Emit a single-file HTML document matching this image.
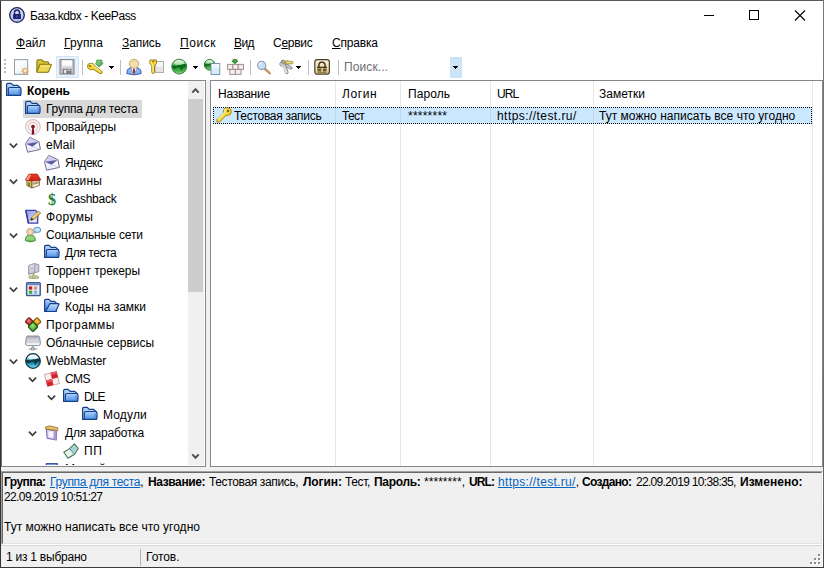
<!DOCTYPE html>
<html lang="ru"><head><meta charset="utf-8"><title>База.kdbx - KeePass</title>
<style>
*{box-sizing:border-box;margin:0;padding:0}
html,body{width:824px;height:568px;overflow:hidden;background:#fff}
body{font-family:"Liberation Sans",sans-serif;font-size:12px;color:#000;position:relative}
.abs{position:absolute}
.t{position:absolute;white-space:nowrap;line-height:14px;height:14px}
#win{position:absolute;left:0;top:0;width:824px;height:568px;background:#fff;overflow:hidden}
#bl{left:0;top:0;width:1px;height:568px;background:#333}
#bt{left:0;top:0;width:824px;height:1px;background:#5a5a5a}
#br{left:823px;top:0;width:1px;height:568px;background:linear-gradient(#777 0,#686868 80%,#484848 100%)}
#bb{left:0;top:567px;width:824px;height:1px;background:#3a3a3a}
.menu u{text-decoration:underline;text-underline-offset:1px}
#tree{left:1px;top:80px;width:205px;height:387px;border:1px solid #828790;border-left-color:#6a6a6a;background:#fff;overflow:hidden}
#treein{left:0;top:0;width:203px;height:384px;overflow:hidden}
#list{left:210px;top:80px;width:613px;height:387px;border:1px solid #828790;background:#fff;overflow:hidden}
.tr{position:absolute;white-space:nowrap;line-height:18px;height:18px;font-size:12px}
.ic{position:absolute;width:16px;height:16px;overflow:visible}
.chev{position:absolute;width:9px;height:6px}
.sep{position:absolute;top:60px;width:1px;height:15px;background:#bdbdbd}
.dd{position:absolute;width:0;height:0;border-left:3px solid transparent;border-right:3px solid transparent;border-top:3px solid #000}
#details{left:1px;top:471px;width:822px;height:74px;background:#f0f0f0;border:1px solid;border-color:#a0a0a0 #fff #fff #a0a0a0}
#detin{left:0;top:0;width:820px;height:72px;border:1px solid;border-color:#696969 #e3e3e3 #e3e3e3 #696969}
#dettext{left:3px;top:472px;width:816px;height:70px;overflow:hidden}
.dl{position:absolute;left:2px;white-space:nowrap;line-height:15px;height:15px;font-size:12px}
#status{left:1px;top:545px;width:821px;height:22px;background:#f0f0f0;border-top:1px solid #d7d7d7}
a{color:#0563c1;text-decoration:underline}
.colsep{position:absolute;top:0;width:1px;height:385px;background:rgba(160,160,160,0.25)}
.hsep{position:absolute;top:0;width:1px;height:24px;background:#e5e5e5}
.lt{position:absolute;white-space:nowrap;line-height:14px;height:14px;font-size:12px}
</style></head><body>
<div id="win">
<svg class="ic" style="left:9px;top:7px" viewBox="0 0 16 16"><defs><radialGradient id="g35_k" cx="0.5" cy="0.35" r="0.7"><stop offset="0" stop-color="#eef0fc"/><stop offset="1" stop-color="#a8b0e4"/></radialGradient></defs>
<circle cx="8" cy="8" r="7.3" fill="url(#g35_k)" stroke="#1a2058" stroke-width="1.3"/>
<path d="M5.5 7.4 V5.4 A2.5 2.5 0 0 1 10.5 5.4 V7.4" fill="#d4d8f4" stroke="#1e2670" stroke-width="1.5"/>
<rect x="4.1" y="7" width="7.8" height="5" rx="0.5" fill="#1b2270"/>
<rect x="7.4" y="8.4" width="1.2" height="2.2" fill="#5a66c0"/></svg>
<!-- window buttons -->
<svg class="abs" style="left:700px;top:8px;width:120px;height:16px" viewBox="0 0 120 16">
<path d="M4 7.5 H14" stroke="#000" stroke-width="1" fill="none"/>
<rect x="49.5" y="2.5" width="9" height="9" stroke="#000" stroke-width="1" fill="none"/>
<path d="M95 2.5 L105 12.5 M105 2.5 L95 12.5" stroke="#000" stroke-width="1.1" fill="none"/>
</svg>
<!-- menu -->
<div class="t" id="title" style="left:30px;top:9px;letter-spacing:-0.43px;">База.kdbx - KeePass</div>
<div class="t" id="m1" style="left:16px;top:36px;letter-spacing:-0.01px;"><u>Ф</u>айл</div>
<div class="t" id="m2" style="left:64px;top:36px;letter-spacing:0.19px;"><u>Г</u>руппа</div>
<div class="t" id="m3" style="left:122px;top:36px;letter-spacing:-0.08px;"><u>З</u>апись</div>
<div class="t" id="m4" style="left:180px;top:36px;letter-spacing:0.56px;"><u>П</u>оиск</div>
<div class="t" id="m5" style="left:234px;top:36px;letter-spacing:-0.62px;"><u>В</u>ид</div>
<div class="t" id="m6" style="left:273px;top:36px;letter-spacing:-0.26px;">С<u>е</u>рвис</div>
<div class="t" id="m7" style="left:332px;top:36px;letter-spacing:-0.18px;"><u>С</u>правка</div>
<div class="t" id="search" style="left:344px;top:60px;letter-spacing:0.1px;color:#6d6d6d;">Поиск...</div>
<!-- toolbar -->
<div id="toolbar">
<svg class="abs" style="left:4px;top:58px;width:4px;height:18px" viewBox="0 0 4 18"><g fill="#bcbcbc"><rect x="0" y="1" width="2" height="2"/><rect x="0" y="5" width="2" height="2"/><rect x="0" y="9" width="2" height="2"/><rect x="0" y="13" width="2" height="2"/></g></svg>
<div class="abs" style="left:56px;top:56px;width:23px;height:22px;background:#e5f1fb;border:1px solid #d2e6f7"></div>
<svg class="ic" style="left:13px;top:59px" viewBox="0 0 16 16"><defs><linearGradient id="g23_n" x1="0" y1="0" x2="0.7" y2="1"><stop offset="0" stop-color="#ffffff"/><stop offset="0.5" stop-color="#fafcfe"/><stop offset="1" stop-color="#dfebf8"/></linearGradient></defs>
<rect x="1.5" y="0.7" width="13.2" height="14.6" fill="url(#g23_n)" stroke="#838f9c" stroke-width="0.9"/>
<g fill="#dda658"><circle cx="12" cy="11.8" r="2.6"/><path d="M12 8 L12.9 10 L15.2 9.2 L14.2 11.6 L16 13 L13.6 13.4 L13.2 15.6 L12 14 L10.4 15.4 L10.2 13.2 L8 12.8 L9.8 11.4 L9 9.4 L11.1 10Z"/></g>
<circle cx="12.1" cy="11.8" r="1.7" fill="#fdf0c4"/></svg><svg class="ic" style="left:36px;top:59px" viewBox="0 0 16 16"><path d="M0.9 2.2 Q0.9 0.8 2.2 0.8 L5.4 0.8 Q6.2 0.8 6.8 1.6 L7.6 2.8 L11.4 2.8 Q12.6 2.8 12.6 4 L12.6 12.6 L0.9 12.6Z" fill="#d8c23c" stroke="#85750f" stroke-width="1.1" stroke-linejoin="round"/>
<path d="M4.6 5.2 L14.6 5.2 Q15.8 5.2 15.2 6.4 L12.6 12.4 Q12.3 13.2 11.4 13.2 L1.6 13.2 Q0.6 13.2 1 12.2 L3.6 6 Q3.9 5.2 4.6 5.2Z" fill="#ecd854" stroke="#85750f" stroke-width="1.1"/>
<path d="M5 6.4 L14 6.4 L13.4 7.6 L4.4 7.6Z" fill="#f8ec94"/></svg><svg class="ic" style="left:59px;top:59px" viewBox="0 0 16 16"><rect x="1" y="0.6" width="14" height="14.4" fill="#c4c4c8" stroke="#808086" stroke-width="1"/>
<rect x="3" y="1.2" width="10" height="7" fill="#fbfbfc"/><rect x="3" y="6.4" width="10" height="1.8" fill="#e4e4e8"/>
<rect x="3.8" y="10" width="8.6" height="5" fill="#7c7c82"/><rect x="5.2" y="10.8" width="2" height="3.4" fill="#f4f4f4"/><rect x="7.8" y="10.6" width="4" height="1.2" fill="#c8c8cc"/></svg><svg class="ic" style="left:87px;top:59px" viewBox="0 0 16 16"><defs><linearGradient id="g26_a" x1="0" y1="0" x2="1" y2="1"><stop offset="0" stop-color="#9ee29a"/><stop offset="1" stop-color="#2f9444"/></linearGradient></defs>
<path d="M9.6 1.1 L14.9 1.1 L14.9 3.8 L16.2 4.4 L12 8 L8.4 4.6 L9.6 4.2Z" fill="url(#g26_a)" stroke="#3c8c4c" stroke-width="0.7" stroke-linejoin="round"/>
<path d="M0.5 7.2 Q0.5 4.4 3.6 4.3 Q6.4 4.2 7.8 6.2 L8.4 7.6 L14.8 12.2 L15 14.2 L13 14.6 L6.6 10.4 Q3.6 11.4 1.5 9.8 Q0.4 8.6 0.5 7.2Z" fill="#f4d63a" stroke="#94780e" stroke-width="0.9" stroke-linejoin="round"/>
<path d="M1.8 6.4 Q3 5.2 5.6 5.4 L7.4 7.6 L13.6 12.4" fill="none" stroke="#fdf2a0" stroke-width="1"/>
<ellipse cx="2.9" cy="6.9" rx="1.1" ry="0.9" fill="#7c5c0c"/></svg><svg class="ic" style="left:126px;top:59px" viewBox="0 0 16 16"><path d="M0.9 14.6 Q0.5 9.8 4.6 8.8 L11.4 8.8 Q15.5 9.8 15.1 14.6 Q8 17 0.9 14.6Z" fill="#86b4ee" stroke="#2c5cac" stroke-width="1"/>
<path d="M5.4 8.6 L8 15.4 L10.6 8.6Z" fill="#ffffff"/>
<path d="M7.2 9.4 L8.8 9.4 L9.2 13.6 L8 15.2 L6.8 13.6Z" fill="#b42c28"/>
<ellipse cx="8" cy="4.7" rx="4.7" ry="4.5" fill="#f6dfae" stroke="#c4a060" stroke-width="0.9"/>
<path d="M3.8 3.4 Q8 -0.6 12.2 3.4 Q8 1.8 3.8 3.4Z" fill="#e8c884"/></svg><svg class="ic" style="left:148px;top:59px" viewBox="0 0 16 16"><rect x="7" y="2.6" width="8.6" height="10.8" fill="#e6e6e6" stroke="#a4a4a4" stroke-width="0.9"/>
<rect x="8.6" y="3.2" width="6.4" height="4.6" fill="#f6f6f6"/>
<path d="M2 1 L8.4 1 L8.6 4.4 L6.6 6.8 L6.6 13.4 L5.2 14.8 L3.8 13.6 L3.8 6.8 L1.8 4.4Z" fill="#f4d63a" stroke="#94780e" stroke-width="0.9" stroke-linejoin="round"/>
<path d="M3.2 2 L3.2 4.2 L4.8 6.2 L4.8 13" fill="none" stroke="#fdf2a0" stroke-width="0.9"/>
<rect x="4.4" y="1.8" width="1.8" height="1.4" fill="#7c5c0c"/></svg><svg class="ic" style="left:170px;top:59px" viewBox="0 0 16 16"><defs><linearGradient id="g29_g" x1="0" y1="0" x2="0" y2="1"><stop offset="0" stop-color="#d4f0d4"/><stop offset="0.32" stop-color="#6cc66c"/><stop offset="0.55" stop-color="#2a9a34"/><stop offset="0.8" stop-color="#48b44c"/><stop offset="1" stop-color="#98dc98"/></linearGradient>
<clipPath id="g29_c"><circle cx="9.2" cy="7.6" r="7.4"/></clipPath></defs>
<circle cx="9.2" cy="7.6" r="7.4" fill="url(#g29_g)"/>
<g clip-path="url(#g29_c)"><path d="M1.80 7.01 Q4.27 5.43 6.24 7.21 L7.82 6.02 Q11.17 4.64 16.60 5.03 L16.60 7.60 Q14.13 7.99 13.15 9.18 L11.57 11.55 Q10.38 10.56 9.79 8.39 L7.23 8.59 Q6.24 10.17 4.27 9.97 Q2.29 9.18 1.80 7.01Z" fill="#0d6a1e"/>
<ellipse cx="9.2" cy="3.46" rx="5.13" ry="2.47" fill="#f4fff4" opacity="0.55"/></g>
<circle cx="9.2" cy="7.6" r="7.4" fill="none" stroke="#2c6c34" stroke-width="0.9"/></svg><svg class="ic" style="left:204px;top:59px" viewBox="0 0 16 16"><defs><linearGradient id="g30_g" x1="0" y1="0" x2="0" y2="1"><stop offset="0" stop-color="#d4f0d4"/><stop offset="0.32" stop-color="#6cc66c"/><stop offset="0.55" stop-color="#2a9a34"/><stop offset="0.8" stop-color="#48b44c"/><stop offset="1" stop-color="#98dc98"/></linearGradient>
<clipPath id="g30_c"><circle cx="5.7" cy="5.8" r="5.4"/></clipPath></defs>
<circle cx="5.7" cy="5.8" r="5.4" fill="url(#g30_g)"/>
<g clip-path="url(#g30_c)"><path d="M0.30 5.37 Q2.10 4.22 3.54 5.51 L4.69 4.65 Q7.14 3.64 11.10 3.93 L11.10 5.80 Q9.30 6.09 8.58 6.95 L7.43 8.68 Q6.56 7.96 6.13 6.38 L4.26 6.52 Q3.54 7.67 2.10 7.53 Q0.66 6.95 0.30 5.37Z" fill="#0d6a1e"/>
<ellipse cx="5.7" cy="2.78" rx="3.74" ry="1.80" fill="#f4fff4" opacity="0.55"/></g>
<circle cx="5.7" cy="5.8" r="5.4" fill="none" stroke="#2c6c34" stroke-width="0.9"/><rect x="7" y="4.5" width="8.8" height="11" fill="#dcebf9" stroke="#6f8ca8" stroke-width="0.9"/>
<rect x="7.6" y="5.1" width="7.6" height="3.4" fill="#f2f8fe"/></svg><svg class="ic" style="left:228px;top:59px" viewBox="0 0 16 16"><path d="M5 0.4 L8.8 0.4 L8.8 2.2 L10 2.2 L6.9 4.8 L3.8 2.2 L5 2.2Z" fill="#3ea83c" stroke="#22721f" stroke-width="0.7" stroke-linejoin="round"/>
<g fill="#f6eeee" stroke="#a09090" stroke-width="1"><rect x="-0.4" y="5.4" width="5.2" height="5"/><rect x="4.8" y="5.4" width="5.4" height="5"/><rect x="10.2" y="5.4" width="5.2" height="5"/><rect x="1.8" y="10.4" width="5.6" height="5"/><rect x="7.4" y="10.4" width="5.6" height="5"/></g></svg><svg class="ic" style="left:256px;top:59px" viewBox="0 0 16 16"><path d="M8.8 9.6 L13.8 14.2" stroke="#a8703c" stroke-width="2.2" stroke-linecap="round"/>
<path d="M9 9.6 L13.6 13.8" stroke="#ecc090" stroke-width="1" stroke-linecap="round"/>
<circle cx="5.7" cy="6.5" r="4.1" fill="#c2def9" stroke="#8e9eae" stroke-width="1.1"/>
<path d="M3 5.8 Q3.6 3.8 6 3.4" fill="none" stroke="#f4faff" stroke-width="1.2"/></svg><svg class="ic" style="left:279px;top:59px" viewBox="0 0 16 16"><g stroke="#7c7c84" stroke-width="0.8" stroke-linejoin="round">
<path d="M1.6 3.2 Q3.4 1 5.6 2.6 L6.4 4.8 L9.2 13.4 L8.4 14.8 L6.8 14.4 L3.8 7.6 Q1.4 7.6 0.8 5.6 Q0.6 4.2 1.6 3.2Z" fill="#d4d4da"/>
<path d="M6 5.6 L8 5.2 L13 8.2 L13.2 9.8 L11.6 10.2 L6.8 7.6Z" fill="#c8c8d0"/>
<path d="M2.4 1.6 Q4.6 0.4 6.2 2 L6.8 3.6 Q6 5.4 4 5.2 Q2 4.6 2.4 1.6Z" fill="#b4aa90"/></g>
<path d="M3 7 L7.4 14" stroke="#f4f4f8" stroke-width="1"/>
<path d="M6.8 2 Q9 1.2 10.2 2.2 L13.6 2.4 Q14.8 3.4 13.6 4.8 L10 5 Q8.4 5.8 6.8 4.8 Q6 3.2 6.8 2Z" fill="#d6c458" stroke="#96842c" stroke-width="0.7" stroke-linejoin="round"/>
<path d="M8 3.4 L13 3.5" stroke="#f0e49c" stroke-width="0.9"/></svg><svg class="ic" style="left:314px;top:59px" viewBox="0 0 16 16"><defs><linearGradient id="g34_l" x1="0" y1="0" x2="0" y2="1"><stop offset="0" stop-color="#f8efd2"/><stop offset="1" stop-color="#e2cc94"/></linearGradient></defs>
<rect x="0.8" y="0.6" width="14.6" height="14.6" rx="2.4" fill="url(#g34_l)" stroke="#4a3f2c" stroke-width="1.2"/>
<path d="M4.9 8.2 V6.4 A3.1 3.3 0 0 1 11.1 6.4 V8.2" fill="none" stroke="#2a2010" stroke-width="1.3"/>
<rect x="3.4" y="8.2" width="9.2" height="5.4" fill="#ad9457"/>
<rect x="7.4" y="8.4" width="1.4" height="5.2" fill="#e4d4a4"/>
<path d="M3 8.3 H13 " stroke="#2a2010" stroke-width="1.1"/>
<path d="M3.6 11 H7 M9 11 H12.4" stroke="#2a2010" stroke-width="1.1"/>
<path d="M3.6 13.4 H12.4" stroke="#7c6838" stroke-width="0.8"/></svg>
<div class="sep" style="left:82px"></div>
<div class="sep" style="left:120px"></div>
<div class="sep" style="left:250px"></div>
<div class="sep" style="left:308px"></div>
<div class="sep" style="left:338px"></div>
<svg class="abs" style="left:109px;top:66px;width:5px;height:3px" viewBox="0 0 5 3" shape-rendering="crispEdges"><rect x="0" y="0" width="5" height="1"/><rect x="1" y="1" width="3" height="1"/><rect x="2" y="2" width="1" height="1"/></svg>
<svg class="abs" style="left:193px;top:66px;width:5px;height:3px" viewBox="0 0 5 3" shape-rendering="crispEdges"><rect x="0" y="0" width="5" height="1"/><rect x="1" y="1" width="3" height="1"/><rect x="2" y="2" width="1" height="1"/></svg>
<svg class="abs" style="left:296px;top:66px;width:5px;height:3px" viewBox="0 0 5 3" shape-rendering="crispEdges"><rect x="0" y="0" width="5" height="1"/><rect x="1" y="1" width="3" height="1"/><rect x="2" y="2" width="1" height="1"/></svg>
<div class="abs" style="left:450px;top:57px;width:12px;height:21px;background:#cce4f7"></div>
<svg class="abs" style="left:453px;top:66px;width:5px;height:3px" viewBox="0 0 5 3" shape-rendering="crispEdges"><rect x="0" y="0" width="5" height="1"/><rect x="1" y="1" width="3" height="1"/><rect x="2" y="2" width="1" height="1"/></svg>
</div>
<div class="abs" style="left:1px;top:80px;width:822px;height:465px;background:#f0f0f0"></div>
<!-- tree -->
<div class="abs" id="tree"><div class="abs" id="treein">
<svg class="ic" style="left:4px;top:2px" viewBox="0 0 16 16"><defs><linearGradient id="g1_f" x1="0" y1="0" x2="0" y2="1"><stop offset="0" stop-color="#b0d4fc"/><stop offset="1" stop-color="#4f8fe6"/></linearGradient></defs>
<path d="M0.6 1.5 Q0.6 0.3 1.8 0.3 L5.3 0.3 L7.2 2.4 L11.8 2.4 L14.4 4.9 L14.4 12.4 L0.6 12.4Z" fill="#b0cff6" stroke="#163f88" stroke-width="1.2" stroke-linejoin="round"/>
<rect x="2.3" y="4.5" width="12.7" height="7.9" rx="1.5" fill="url(#g1_f)" stroke="#163f88" stroke-width="1.2"/>
<path d="M13.1 6.2 V11.2" stroke="#3a6cc0" stroke-width="0.7"/></svg>
<div class="t" id="r0" style="left:25px;top:3px;letter-spacing:-0.06px;font-weight:bold;">Корень</div>
<div class="abs" style="left:21px;top:19px;width:119px;height:18px;background:#d9d9d9"></div>
<svg class="ic" style="left:23px;top:20px" viewBox="0 0 16 16"><defs><linearGradient id="g2_f" x1="0" y1="0" x2="0" y2="1"><stop offset="0" stop-color="#b0d4fc"/><stop offset="1" stop-color="#4f8fe6"/></linearGradient></defs>
<path d="M0.6 1.5 Q0.6 0.3 1.8 0.3 L5.3 0.3 L7.2 2.4 L11.8 2.4 L14.4 4.9 L14.4 12.4 L0.6 12.4Z" fill="#b0cff6" stroke="#163f88" stroke-width="1.2" stroke-linejoin="round"/>
<rect x="2.3" y="4.5" width="12.7" height="7.9" rx="1.5" fill="url(#g2_f)" stroke="#163f88" stroke-width="1.2"/>
<path d="M13.1 6.2 V11.2" stroke="#3a6cc0" stroke-width="0.7"/></svg>
<div class="t" id="r1" style="left:44px;top:21px;letter-spacing:-0.22px;">Группа для теста</div>
<svg class="ic" style="left:23px;top:38px" viewBox="0 0 16 16"><circle cx="7.9" cy="7.9" r="7.3" fill="#fdf5f5" stroke="#dcc0c0" stroke-width="1.1"/>
<circle cx="7.9" cy="7.9" r="4.5" fill="#fef8f8" stroke="#dfc0c0" stroke-width="1.1"/>
<path d="M7.3 8 L6.7 15.6 L9.3 15.6 L8.7 8Z" fill="#7e1224"/>
<circle cx="8" cy="7.6" r="1.9" fill="#84142a"/></svg>
<div class="t" id="r2" style="left:44px;top:39px;letter-spacing:-0.06px;">Провайдеры</div>
<svg class="chev" style="left:7px;top:62px" viewBox="0 0 9 6"><path d="M0.9 0.7 L4.5 4.3 L8.1 0.7" fill="none" stroke="#3c3c3c" stroke-width="1.7"/></svg>
<svg class="ic" style="left:23px;top:56px" viewBox="0 0 16 16"><path d="M4.75 0.4 L14 4.75 L15.4 12.4 L2.6 15.2 L0.5 6.8Z" fill="#f4f4fd" stroke="#5c5c7c" stroke-width="0.9" stroke-linejoin="round"/>
<path d="M4.9 1 L13.4 5 L1.2 6.9Z" fill="#cfcff3"/>
<path d="M1.3 7 L13.5 5.1 L7.6 9.8Z" fill="#5a5aa2"/>
<path d="M1.3 7 L13.5 5.1 L11 5.2 L3 6.4Z" fill="#3c3c84"/>
<path d="M2.8 14.8 L7.6 9.8 L15 12.2" fill="none" stroke="#b8b8d8" stroke-width="0.6"/></svg>
<div class="t" id="r3" style="left:44px;top:57px;letter-spacing:0.08px;">eMail</div>
<svg class="ic" style="left:42px;top:74px" viewBox="0 0 16 16"><path d="M4.75 0.4 L14 4.75 L15.4 12.4 L2.6 15.2 L0.5 6.8Z" fill="#f4f4fd" stroke="#5c5c7c" stroke-width="0.9" stroke-linejoin="round"/>
<path d="M4.9 1 L13.4 5 L1.2 6.9Z" fill="#cfcff3"/>
<path d="M1.3 7 L13.5 5.1 L7.6 9.8Z" fill="#5a5aa2"/>
<path d="M1.3 7 L13.5 5.1 L11 5.2 L3 6.4Z" fill="#3c3c84"/>
<path d="M2.8 14.8 L7.6 9.8 L15 12.2" fill="none" stroke="#b8b8d8" stroke-width="0.6"/></svg>
<div class="t" id="r4" style="left:63px;top:75px;letter-spacing:-0.47px;">Яндекс</div>
<svg class="chev" style="left:7px;top:98px" viewBox="0 0 9 6"><path d="M0.9 0.7 L4.5 4.3 L8.1 0.7" fill="none" stroke="#3c3c3c" stroke-width="1.7"/></svg>
<svg class="ic" style="left:23px;top:92px" viewBox="0 0 16 16"><defs><linearGradient id="g6_h" x1="0" y1="0" x2="0" y2="1"><stop offset="0" stop-color="#f03a24"/><stop offset="1" stop-color="#c42414"/></linearGradient></defs>
<path d="M1.8 6.6 L1.8 12.4 L7 15 L7 7.4Z" fill="#e9bd6c" stroke="#5e3c1a" stroke-width="0.7" stroke-linejoin="round"/>
<path d="M7 7.4 L14.4 6.8 L14.4 12.4 L7 15Z" fill="#fbf4cc" stroke="#5e3c1a" stroke-width="0.7" stroke-linejoin="round"/>
<path d="M3.2 9.2 L5 9.8 L5 14 L3.2 13.1Z" fill="#4c8a2a"/>
<path d="M8.3 9.4 L9.5 9.2 L9.5 11.4 L8.3 11.7Z M10.5 9 L11.7 8.8 L11.7 10.9 L10.5 11.2Z M12.5 8.7 L13.5 8.5 L13.5 10.4 L12.5 10.7Z" fill="#6e5434"/>
<path d="M0.4 6.9 L3.9 1.1 L12.3 1.1 L15.8 6.9 L13.6 7.6 L8 7.9 L2.6 7.6Z" fill="url(#g6_h)" stroke="#8e1a10" stroke-width="0.7" stroke-linejoin="round"/>
<path d="M0.9 6.7 L4.1 1.5 L6.2 1.7 L3.4 7.3Z" fill="#f3a07e"/></svg>
<div class="t" id="r5" style="left:44px;top:93px;letter-spacing:0.12px;">Магазины</div>
<svg class="ic" style="left:42px;top:110px" viewBox="0 0 16 16"><text x="8" y="13.6" text-anchor="middle" font-family="Liberation Serif,serif" font-weight="bold" font-size="16" fill="#1f8236">$</text></svg>
<div class="t" id="r6" style="left:63px;top:111px;letter-spacing:-0.23px;">Cashback</div>
<svg class="ic" style="left:23px;top:128px" viewBox="0 0 16 16"><defs><linearGradient id="g8_n" x1="0" y1="0" x2="1" y2="1"><stop offset="0" stop-color="#8e98e4"/><stop offset="1" stop-color="#dfe4fb"/></linearGradient></defs>
<path d="M0.7 1.4 L10.6 1.4 L13 4 L12.6 14.2 L3.2 14.2Z" fill="url(#g8_n)" stroke="#4444a4" stroke-width="1.3" stroke-linejoin="round"/>
<path d="M1 1.6 L3.6 14" stroke="#3a3a98" stroke-width="1.2"/>
<path d="M4.6 12 L11 12" stroke="#f4f6ff" stroke-width="1.6"/>
<path d="M5.6 11.4 L6.6 8.6 L13.8 2.2 L15.7 4.2 L8.4 10.6Z" fill="#ecc565" stroke="#8e6a24" stroke-width="0.8" stroke-linejoin="round"/>
<path d="M5.6 11.4 L6.6 8.6 L8.4 10.6Z" fill="#2e2416"/>
<path d="M7.2 8.6 L13.8 2.9" stroke="#fbe9a8" stroke-width="0.8"/></svg>
<div class="t" id="r7" style="left:44px;top:129px;letter-spacing:0.38px;">Форумы</div>
<svg class="chev" style="left:7px;top:152px" viewBox="0 0 9 6"><path d="M0.9 0.7 L4.5 4.3 L8.1 0.7" fill="none" stroke="#3c3c3c" stroke-width="1.7"/></svg>
<svg class="ic" style="left:23px;top:146px" viewBox="0 0 16 16"><ellipse cx="12.2" cy="2.9" rx="3.6" ry="2.6" fill="#bfe3f4" stroke="#5694c6" stroke-width="1"/>
<path d="M9.6 4.4 L8.4 6.2 L11 5.2Z" fill="#bfe3f4" stroke="#5694c6" stroke-width="0.7"/>
<path d="M0.3 13.6 Q0.2 8 5.2 8 Q10.4 8 10.4 13.6 Q5.2 16.2 0.3 13.6Z" fill="#8fd47c" stroke="#3f8f30" stroke-width="1"/>
<path d="M1.6 12.6 Q5.2 14.8 9.2 12.6 Q5.2 16 1.6 12.6Z" fill="#4a9a3a"/>
<circle cx="5" cy="4.9" r="3.3" fill="#f3d6b6" stroke="#c09a74" stroke-width="0.9"/></svg>
<div class="t" id="r8" style="left:44px;top:147px;letter-spacing:-0.11px;">Социальные сети</div>
<svg class="ic" style="left:42px;top:164px" viewBox="0 0 16 16"><defs><linearGradient id="g10_f" x1="0" y1="0" x2="0" y2="1"><stop offset="0" stop-color="#b0d4fc"/><stop offset="1" stop-color="#4f8fe6"/></linearGradient></defs>
<path d="M0.6 1.5 Q0.6 0.3 1.8 0.3 L5.3 0.3 L7.2 2.4 L11.8 2.4 L14.4 4.9 L14.4 12.4 L0.6 12.4Z" fill="#b0cff6" stroke="#163f88" stroke-width="1.2" stroke-linejoin="round"/>
<rect x="2.3" y="4.5" width="12.7" height="7.9" rx="1.5" fill="url(#g10_f)" stroke="#163f88" stroke-width="1.2"/>
<path d="M13.1 6.2 V11.2" stroke="#3a6cc0" stroke-width="0.7"/></svg>
<div class="t" id="r9" style="left:63px;top:165px;letter-spacing:-0.41px;">Для теста</div>
<svg class="ic" style="left:23px;top:182px" viewBox="0 0 16 16"><defs><linearGradient id="g11_t" x1="0" y1="0" x2="0.3" y2="1"><stop offset="0" stop-color="#fbfbfd"/><stop offset="1" stop-color="#c4c4ce"/></linearGradient></defs>
<path d="M3.8 2.6 L9.6 0.6 L13.8 1.8 L13.8 8.6 L9.6 9.8 L3.8 11.2Z" fill="#cfc8dc" stroke="#8a8a98" stroke-width="0.9" stroke-linejoin="round"/>
<path d="M3.8 2.6 L9.6 0.6 L9.6 9.8 L3.8 11.2Z" fill="url(#g11_t)" stroke="#8a8a98" stroke-width="0.7" stroke-linejoin="round"/>
<path d="M5 4.6 L8.4 3.6 M5 6.2 L8.4 5.2" stroke="#a8a8b8" stroke-width="0.7"/>
<path d="M8.6 10.2 V13.2" stroke="#9c9c80" stroke-width="1.3"/>
<rect x="3.8" y="13" width="9.8" height="2.4" rx="0.8" fill="#d2d29a" stroke="#9a9a6c" stroke-width="0.7"/>
<rect x="7.4" y="12.2" width="2.6" height="2.6" fill="#e2e0a8" stroke="#9a9a6c" stroke-width="0.6"/></svg>
<div class="t" id="r10" style="left:44px;top:183px;letter-spacing:-0.05px;">Торрент трекеры</div>
<svg class="chev" style="left:7px;top:206px" viewBox="0 0 9 6"><path d="M0.9 0.7 L4.5 4.3 L8.1 0.7" fill="none" stroke="#3c3c3c" stroke-width="1.7"/></svg>
<svg class="ic" style="left:23px;top:200px" viewBox="0 0 16 16"><rect x="1.6" y="1.8" width="13.6" height="12.8" rx="0.8" fill="#eaf0f9" stroke="#3c5c90" stroke-width="1.5"/>
<rect x="2.2" y="2.4" width="12.4" height="1.8" fill="#5f82ba"/>
<rect x="3.8" y="5.4" width="3.4" height="3.2" fill="#b82020"/><rect x="8.8" y="5.4" width="3.4" height="3.2" fill="#ea8c7c"/>
<rect x="3.8" y="9.6" width="3.4" height="3.2" fill="#4ea83c"/><rect x="8.8" y="9.6" width="3.4" height="3.2" fill="#88b2e2"/></svg>
<div class="t" id="r11" style="left:44px;top:201px;letter-spacing:0.24px;">Прочее</div>
<svg class="ic" style="left:42px;top:218px" viewBox="0 0 16 16"><defs><linearGradient id="g13_b" x1="0.2" y1="0" x2="0" y2="1"><stop offset="0" stop-color="#b8d4f8"/><stop offset="1" stop-color="#2c6ae0"/></linearGradient>
<linearGradient id="g13_f" x1="0" y1="0" x2="0" y2="1"><stop offset="0" stop-color="#c8e0fd"/><stop offset="1" stop-color="#6aa2ee"/></linearGradient></defs>
<path d="M0.6 1.5 Q0.6 0.3 1.8 0.3 L5.1 0.3 L7 2.4 L10.6 2.4 L12.2 4 L12.2 12.4 L0.6 12.4Z" fill="url(#g13_b)" stroke="#163f88" stroke-width="1.2" stroke-linejoin="round"/>
<path d="M5.9 4.5 L14.5 4.6 Q15.2 4.8 14.9 5.6 L12 12 Q11.8 12.5 11.2 12.5 L1.7 12.5Z" fill="url(#g13_f)" stroke="#163f88" stroke-width="1.1" stroke-linejoin="round"/></svg>
<div class="t" id="r12" style="left:63px;top:219px;letter-spacing:-0.03px;">Коды на замки</div>
<svg class="ic" style="left:23px;top:236px" viewBox="0 0 16 16"><defs><radialGradient id="g14_r" cx="0.45" cy="0.35" r="0.7"><stop offset="0" stop-color="#f67c78"/><stop offset="1" stop-color="#a81418"/></radialGradient>
<radialGradient id="g14_y" cx="0.45" cy="0.35" r="0.7"><stop offset="0" stop-color="#fcd44c"/><stop offset="1" stop-color="#c87810"/></radialGradient>
<radialGradient id="g14_gr" cx="0.45" cy="0.4" r="0.7"><stop offset="0" stop-color="#9cec68"/><stop offset="1" stop-color="#1a7418"/></radialGradient></defs>
<path d="M3.4 1.1 Q4.1 0.5 4.8 1.1 L7.6 4 Q8.1 4.8 7.6 5.6 L4.6 8.6 L0.8 5.4 Q0.2 4.8 0.8 4Z" fill="url(#g14_r)" stroke="#6c1010" stroke-width="1.1" stroke-linejoin="round"/>
<path d="M11.4 1.1 Q12.1 0.5 12.8 1.1 L15.4 4 Q15.9 4.8 15.4 5.6 L11.6 8.6 L8.6 5.6 Q8.1 4.8 8.6 4Z" fill="url(#g14_y)" stroke="#84500c" stroke-width="1.1" stroke-linejoin="round"/>
<path d="M7.4 5.2 Q8 4.7 8.6 5.2 L12.4 9 Q12.9 9.7 12.4 10.3 L8.7 14.2 Q8 14.8 7.3 14.2 L3.6 10.3 Q3.1 9.7 3.6 9Z" fill="url(#g14_gr)" stroke="#184c10" stroke-width="1.1" stroke-linejoin="round"/></svg>
<div class="t" id="r13" style="left:44px;top:237px;letter-spacing:0.43px;">Программы</div>
<svg class="ic" style="left:23px;top:254px" viewBox="0 0 16 16"><defs><linearGradient id="g15_d" x1="0" y1="0" x2="0" y2="1"><stop offset="0" stop-color="#a6a6be"/><stop offset="0.45" stop-color="#d4d4de"/><stop offset="1" stop-color="#fafafc"/></linearGradient></defs>
<path d="M2.8 1 L13.2 1 Q14.2 1 14.6 2.2 L15.4 8 Q15.6 10.6 13.6 10.6 L2.4 10.6 Q0.4 10.6 0.6 8 L1.4 2.2 Q1.8 1 2.8 1Z" fill="url(#g15_d)" stroke="#84848e" stroke-width="0.9"/>
<path d="M1 6.8 H15" stroke="#b4b4c0" stroke-width="0.7"/>
<path d="M8 10.6 V13.4 M3.6 14 H12.4" stroke="#8c8c8c" stroke-width="1.2"/>
<rect x="6.6" y="12.8" width="2.8" height="2.2" fill="#c8c8cc" stroke="#7c7c80" stroke-width="0.6"/></svg>
<div class="t" id="r14" style="left:44px;top:255px;letter-spacing:0.04px;">Облачные сервисы</div>
<svg class="chev" style="left:7px;top:278px" viewBox="0 0 9 6"><path d="M0.9 0.7 L4.5 4.3 L8.1 0.7" fill="none" stroke="#3c3c3c" stroke-width="1.7"/></svg>
<svg class="ic" style="left:23px;top:272px" viewBox="0 0 16 16"><defs><linearGradient id="g16_g" x1="0" y1="0" x2="0" y2="1"><stop offset="0" stop-color="#f0fcff"/><stop offset="0.32" stop-color="#86dcee"/><stop offset="0.55" stop-color="#1a6e86"/><stop offset="0.8" stop-color="#38b2d0"/><stop offset="1" stop-color="#98e8f8"/></linearGradient>
<clipPath id="g16_c"><circle cx="8" cy="8" r="7.3"/></clipPath></defs>
<circle cx="8" cy="8" r="7.3" fill="url(#g16_g)"/>
<g clip-path="url(#g16_c)"><path d="M0.70 7.42 Q3.13 5.86 5.08 7.61 L6.64 6.44 Q9.95 5.08 15.30 5.47 L15.30 8.00 Q12.87 8.39 11.89 9.56 L10.34 11.89 Q9.17 10.92 8.58 8.78 L6.05 8.97 Q5.08 10.53 3.13 10.34 Q1.19 9.56 0.70 7.42Z" fill="#0a3a4a"/>
<ellipse cx="8" cy="3.91" rx="5.06" ry="2.43" fill="#ffffff" opacity="0.75"/></g>
<circle cx="8" cy="8" r="7.3" fill="none" stroke="#102e3a" stroke-width="1.2"/></svg>
<div class="t" id="r15" style="left:44px;top:273px;letter-spacing:-0.11px;">WebMaster</div>
<svg class="chev" style="left:26px;top:296px" viewBox="0 0 9 6"><path d="M0.9 0.7 L4.5 4.3 L8.1 0.7" fill="none" stroke="#3c3c3c" stroke-width="1.7"/></svg>
<svg class="ic" style="left:42px;top:290px" viewBox="0 0 16 16"><g transform="rotate(-14 8 8)"><rect x="1.8" y="1.8" width="12.4" height="12.4" fill="#fbeeee" stroke="#c8a0a0" stroke-width="0.8"/>
<rect x="8" y="1.8" width="6.2" height="6.2" fill="#d4222c"/><rect x="1.8" y="8" width="6.2" height="6.2" fill="#d4222c"/>
<rect x="8" y="1.8" width="6.2" height="2.4" fill="#ec5058"/><rect x="1.8" y="8" width="6.2" height="2.4" fill="#ec5058"/></g></svg>
<div class="t" id="r16" style="left:63px;top:291px;letter-spacing:-0.59px;">CMS</div>
<svg class="chev" style="left:45px;top:314px" viewBox="0 0 9 6"><path d="M0.9 0.7 L4.5 4.3 L8.1 0.7" fill="none" stroke="#3c3c3c" stroke-width="1.7"/></svg>
<svg class="ic" style="left:61px;top:308px" viewBox="0 0 16 16"><defs><linearGradient id="g18_f" x1="0" y1="0" x2="0" y2="1"><stop offset="0" stop-color="#b0d4fc"/><stop offset="1" stop-color="#4f8fe6"/></linearGradient></defs>
<path d="M0.6 1.5 Q0.6 0.3 1.8 0.3 L5.3 0.3 L7.2 2.4 L11.8 2.4 L14.4 4.9 L14.4 12.4 L0.6 12.4Z" fill="#b0cff6" stroke="#163f88" stroke-width="1.2" stroke-linejoin="round"/>
<rect x="2.3" y="4.5" width="12.7" height="7.9" rx="1.5" fill="url(#g18_f)" stroke="#163f88" stroke-width="1.2"/>
<path d="M13.1 6.2 V11.2" stroke="#3a6cc0" stroke-width="0.7"/></svg>
<div class="t" id="r17" style="left:82px;top:309px;letter-spacing:-0.9px;">DLE</div>
<svg class="ic" style="left:80px;top:326px" viewBox="0 0 16 16"><defs><linearGradient id="g19_f" x1="0" y1="0" x2="0" y2="1"><stop offset="0" stop-color="#b0d4fc"/><stop offset="1" stop-color="#4f8fe6"/></linearGradient></defs>
<path d="M0.6 1.5 Q0.6 0.3 1.8 0.3 L5.3 0.3 L7.2 2.4 L11.8 2.4 L14.4 4.9 L14.4 12.4 L0.6 12.4Z" fill="#b0cff6" stroke="#163f88" stroke-width="1.2" stroke-linejoin="round"/>
<rect x="2.3" y="4.5" width="12.7" height="7.9" rx="1.5" fill="url(#g19_f)" stroke="#163f88" stroke-width="1.2"/>
<path d="M13.1 6.2 V11.2" stroke="#3a6cc0" stroke-width="0.7"/></svg>
<div class="t" id="r18" style="left:101px;top:327px;letter-spacing:0.15px;">Модули</div>
<svg class="chev" style="left:26px;top:350px" viewBox="0 0 9 6"><path d="M0.9 0.7 L4.5 4.3 L8.1 0.7" fill="none" stroke="#3c3c3c" stroke-width="1.7"/></svg>
<svg class="ic" style="left:42px;top:344px" viewBox="0 0 16 16"><path d="M2.4 4.4 L12.6 5.6 L12.2 15 L3.2 13.2Z" fill="#e4dcf6" stroke="#7e6cb4" stroke-width="1.2" stroke-linejoin="round"/>
<path d="M9.8 5.4 L12.6 5.6 L12.2 15 L9.6 14.4Z" fill="#a898d4"/>
<path d="M4.6 6.4 L9 7 L8.8 12.6 L5 11.8Z" fill="#f8f4ff"/>
<path d="M1.4 2.2 L5.4 0.8 L13.8 2.8 L13.6 5.6 L1.6 4Z" fill="#e2c070" stroke="#9c7a2c" stroke-width="0.9" stroke-linejoin="round"/></svg>
<div class="t" id="r19" style="left:63px;top:345px;letter-spacing:-0.18px;">Для заработка</div>
<svg class="ic" style="left:61px;top:362px" viewBox="0 0 16 16"><path d="M0.8 9.2 L6.6 5.6 L11.4 0.8 L15.2 5.4 L11.6 11.2 L5 15.2Z" fill="#cdeadc" stroke="#4c7460" stroke-width="1.1" stroke-linejoin="round"/>
<path d="M6.6 5.6 L10.8 10.6" stroke="#4c7460" stroke-width="0.9"/>
<path d="M7.6 5.8 L11.2 2.2 L14 5.4 L11.2 9.8Z" fill="#a2d2de"/>
<path d="M2.2 9.4 L6.4 6.8 L9.8 10.8 L5.2 13.8Z" fill="#e4f5ed"/></svg>
<div class="t" id="r20" style="left:82px;top:363px;letter-spacing:0.5px;">ПП</div>
<svg class="ic" style="left:42px;top:380px" viewBox="0 0 16 16"><rect x="2.2" y="2.6" width="11.2" height="8" fill="#2c48b4" stroke="#2a3a94" stroke-width="0.8"/>
<rect x="3" y="3.2" width="9.6" height="1" fill="#8ca4e8"/><rect x="6" y="11" width="4" height="2" fill="#999"/><rect x="4" y="13" width="8" height="1.4" fill="#777"/></svg>
<div class="t" id="r21" style="left:63px;top:381px;letter-spacing:-0.9px;">Мои сайты</div>
</div>
<!-- scrollbar -->
<div class="abs" style="left:186px;top:0;width:16px;height:384px;background:#f0f0f0"></div>
<div class="abs" style="left:186px;top:18px;width:15px;height:193px;background:#cdcdcd"></div>
<svg class="abs" style="left:189px;top:6px;width:9px;height:7px" viewBox="0 0 9 7"><path d="M1.3 5.6 L4.5 2.3 L7.7 5.6" fill="none" stroke="#505050" stroke-width="2"/></svg>
<svg class="abs" style="left:189px;top:372px;width:9px;height:7px" viewBox="0 0 9 7"><path d="M1.3 1.4 L4.5 4.7 L7.7 1.4" fill="none" stroke="#505050" stroke-width="2"/></svg>
</div>
<!-- list -->
<div class="abs" id="list">
<div class="abs" style="left:2px;top:26px;width:599px;height:17px;background:#cce8ff"></div>
<div class="colsep" style="left:124px"></div>
<div class="colsep" style="left:189px"></div>
<div class="colsep" style="left:279px"></div>
<div class="colsep" style="left:382px"></div>
<div class="colsep" style="left:601px"></div>
<div class="abs" style="left:2px;top:26px;width:599px;height:17px;border:1px dotted #000"></div>
<div class="t" id="h1" style="left:7px;top:6px;letter-spacing:-0.2px;">Название</div>
<div class="t" id="h2" style="left:131px;top:6px;letter-spacing:0.62px;">Логин</div>
<div class="t" id="h3" style="left:197px;top:6px;letter-spacing:0.07px;">Пароль</div>
<div class="t" id="h4" style="left:286px;top:6px;letter-spacing:-0.9px;">URL</div>
<div class="t" id="h5" style="left:388px;top:6px;letter-spacing:-0.0px;">Заметки</div>
<div class="t" id="c1" style="left:23px;top:28px;letter-spacing:-0.29px;">Тестовая запись</div>
<div class="t" id="c2" style="left:131px;top:28px;letter-spacing:-0.69px;">Тест</div>
<div class="t" id="c3" style="left:197px;top:28px;letter-spacing:0.23px;">********</div>
<div class="t" id="c4" style="left:286px;top:28px;letter-spacing:0.44px;">https://test.ru/</div>
<div class="t" id="c5" style="left:388px;top:28px;letter-spacing:0.02px;">Тут можно написать все что угодно</div>
<svg class="ic" style="left:5px;top:26px" viewBox="0 0 16 16"><path d="M10.8 0.8 Q15.2 0.8 15.2 4.8 Q15.2 8.4 11.2 8.6 L10 8.4 L3.6 15 L1.2 15.2 L0.8 12.8 L7.6 6 Q7 0.8 10.8 0.8Z" fill="#f6d83c" stroke="#a88410" stroke-width="1" stroke-linejoin="round"/>
<path d="M10.6 2 Q8.4 2.2 8.6 5.4 L2 12.6" fill="none" stroke="#fdf2a4" stroke-width="1.2"/>
<circle cx="12" cy="4" r="1.2" fill="#7c5c0c"/></svg>
</div>
<!-- details -->
<div class="abs" id="details"><div class="abs" id="detin"></div></div>
<div class="abs" id="dettext">
<div class="t" id="d_a" style="left:1px;top:3.0px;letter-spacing:-0.56px;"><b>Группа:</b></div>
<div class="t" id="d_b" style="left:47px;top:3.0px;letter-spacing:-0.32px;"><a>Группа для теста</a>,</div>
<div class="t" id="d_c" style="left:145px;top:3.0px;letter-spacing:-0.39px;"><b>Название:</b></div>
<div class="t" id="d_d" style="left:206px;top:3.0px;letter-spacing:-0.36px;">Тестовая запись,</div>
<div class="t" id="d_e" style="left:300px;top:3.0px;letter-spacing:-0.07px;"><b>Логин:</b></div>
<div class="t" id="d_f" style="left:342px;top:3.0px;letter-spacing:-0.4px;">Тест,</div>
<div class="t" id="d_g" style="left:371px;top:3.0px;letter-spacing:-0.32px;"><b>Пароль:</b></div>
<div class="t" id="d_h" style="left:421px;top:3.0px;letter-spacing:0.04px;">********,</div>
<div class="t" id="d_i" style="left:466px;top:3.0px;letter-spacing:-0.89px;"><b>URL:</b></div>
<div class="t" id="d_j" style="left:495px;top:3.0px;letter-spacing:0.31px;"><a>https://test.ru/</a>,</div>
<div class="t" id="d_k" style="left:579px;top:3.0px;letter-spacing:-0.67px;"><b>Создано:</b></div>
<div class="t" id="d_l" style="left:633px;top:3.0px;letter-spacing:-0.69px;">22.09.2019 10:38:35,</div>
<div class="t" id="d_m" style="left:737px;top:3.0px;letter-spacing:0.03px;"><b>Изменено:</b></div>
<div class="t" id="d2" style="left:1px;top:18px;letter-spacing:-0.62px;">22.09.2019 10:51:27</div>
<div class="t" id="d3" style="left:1px;top:48px;letter-spacing:0.01px;">Тут можно написать все что угодно</div>
</div>
<!-- status -->
<div class="abs" id="status">
<div class="t" id="s1" style="left:5px;top:4px;letter-spacing:-0.24px;">1 из 1 выбрано</div>
<div class="t" id="s2" style="left:145px;top:4px;letter-spacing:-0.07px;">Готов.</div>
<div class="abs" style="left:139px;top:3px;width:1px;height:17px;background:#b4b4b4"></div>
<svg class="abs" style="left:809px;top:8px;width:12px;height:12px" viewBox="0 0 12 12" shape-rendering="crispEdges"><g fill="#fff"><rect x="9" y="1" width="2" height="2"/><rect x="5" y="5" width="2" height="2"/><rect x="9" y="5" width="2" height="2"/><rect x="1" y="9" width="2" height="2"/><rect x="5" y="9" width="2" height="2"/><rect x="9" y="9" width="2" height="2"/></g><g fill="#8a8a8a"><rect x="8" y="0" width="2" height="2"/><rect x="4" y="4" width="2" height="2"/><rect x="8" y="4" width="2" height="2"/><rect x="0" y="8" width="2" height="2"/><rect x="4" y="8" width="2" height="2"/><rect x="8" y="8" width="2" height="2"/></g></svg>
</div>
<div class="abs" id="bl"></div><div class="abs" id="bt"></div><div class="abs" id="br"></div><div class="abs" id="bb"></div>
</div>
</body></html>
